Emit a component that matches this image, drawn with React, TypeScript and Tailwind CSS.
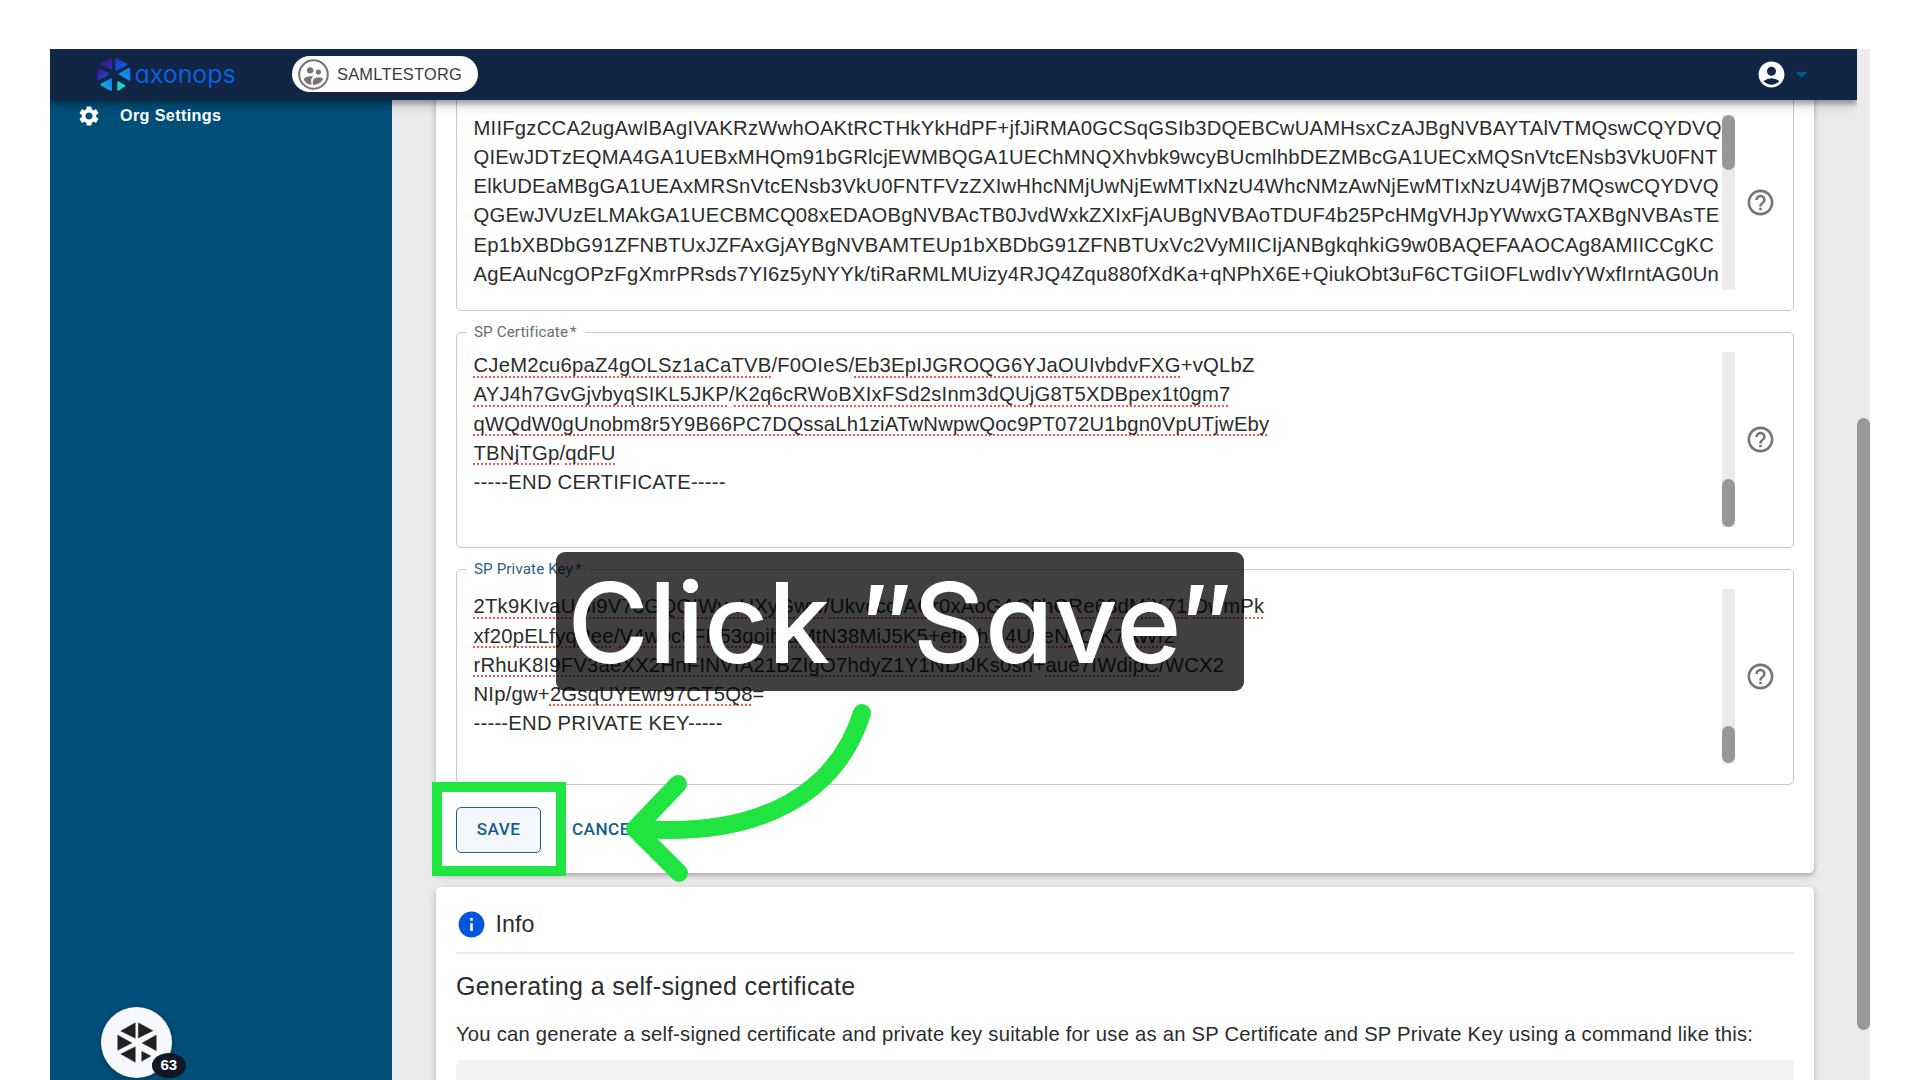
import React from "react";
import { MdSettings, MdAccountCircle, MdArrowDropDown, MdInfo, MdHelpOutline } from "react-icons/md";

type Part = { t: string; bad?: boolean };

const IDP: Part[][] = [
  [{ t: "MIIFgzCCA2ugAwIBAgIVAKRzWwhOAKtRCTHkYkHdPF+jfJiRMA0GCSqGSIb3DQEBCwUAMHsxCzAJBgNVBAYTAlVTMQswCQYDVQ" }],
  [{ t: "QIEwJDTzEQMA4GA1UEBxMHQm91bGRlcjEWMBQGA1UEChMNQXhvbk9wcyBUcmlhbDEZMBcGA1UECxMQSnVtcENsb3VkU0FNT" }],
  [{ t: "ElkUDEaMBgGA1UEAxMRSnVtcENsb3VkU0FNTFVzZXIwHhcNMjUwNjEwMTIxNzU4WhcNMzAwNjEwMTIxNzU4WjB7MQswCQYDVQ" }],
  [{ t: "QGEwJVUzELMAkGA1UECBMCQ08xEDAOBgNVBAcTB0JvdWxkZXIxFjAUBgNVBAoTDUF4b25PcHMgVHJpYWwxGTAXBgNVBAsTE" }],
  [{ t: "Ep1bXBDbG91ZFNBTUxJZFAxGjAYBgNVBAMTEUp1bXBDbG91ZFNBTUxVc2VyMIICIjANBgkqhkiG9w0BAQEFAAOCAg8AMIICCgKC" }],
  [{ t: "AgEAuNcgOPzFgXmrPRsds7YI6z5yNYYk/tiRaRMLMUizy4RJQ4Zqu880fXdKa+qNPhX6E+QiukObt3uF6CTGiIOFLwdIvYWxfIrntAG0Un" }],
];

const CERT: Part[][] = [
  [{ t: "CJeM2cu6paZ4gOLSz1aCaTVB", bad: true }, { t: "/F0OIeS/" }, { t: "Eb3EpIJGROQG6YJaOUIvbdvFXG", bad: true }, { t: "+vQLbZ" }],
  [{ t: "AYJ4h7GvGjvbyqSIKL5JKP", bad: true }, { t: "/" }, { t: "K2q6cRWoBXIxFSd2sInm3dQUjG8T5XDBpex1t0gm7", bad: true }],
  [{ t: "qWQdW0gUnobm8r5Y9B66PC7DQssaLh1ziATwNwpwQoc9PT072U1bgn0VpUTjwEby", bad: true }],
  [{ t: "TBNjTGp", bad: true }, { t: "/" }, { t: "qdFU", bad: true }],
  [{ t: "-----END CERTIFICATE-----" }],
];

const KEY: Part[][] = [
  [{ t: "2Tk9KIvaUGi9V73GQQIWvaUXyGww", bad: true }, { t: "/" }, { t: "UkvccoIACr0xAoGAC8hCRe68dMiX71", bad: true }, { t: "/" }, { t: "DwmPk", bad: true }],
  [{ t: "xf20pELfyqPee", bad: true }, { t: "/" }, { t: "V4w9c6FE53qoihIaMtN38MiJ5K5", bad: true }, { t: "+" }, { t: "efFrhIJ4UpeNyCtK7AWI2", bad: true }],
  [{ t: "rRhuK8I9FV3aeXX2HnFINVIA21BZIgO7hdyZ1Y1NDIJKs0sh", bad: true }, { t: "+" }, { t: "aue7IWdipC", bad: true }, { t: "/WCX2" }],
  [{ t: "NIp/gw+" }, { t: "2GsqUYEwr97CT5Q8", bad: true }, { t: "=" }],
  [{ t: "-----END PRIVATE KEY-----" }],
];

const BADGE_BLADES = [
  "284,127 284,174 240,152",
  "293,127 337,151 293,173",
  "347,164 347,211 304,188",
  "303,213 331,227 303,243",
  "284,199 284,246 240,221",
  "231,164 274,188 231,210",
];

const LOGO_BLADES: [string, string][] = [
  ["213,60 213,88 185,73", "url(#lg0)"],
  ["229,60 259,75 229,91", "url(#lg1)"],
  ["268,88 268,121 240,104", "url(#lg2)"],
  ["235,129 253,140 235,151", "#1fd0d0"],
  ["213,120 213,152 184,136", "url(#lg3)"],
  ["175,88 204,104 175,120", "url(#lg4)"],
];

function BadgeMark() {
  return (
    <svg viewBox="229 125 120 123" className="h-[41px] w-[40px] fill-[#231f20] stroke-[#231f20]">
      {BADGE_BLADES.map((p) => (
        <polygon key={p} points={p} strokeWidth="1" strokeLinejoin="round" />
      ))}
    </svg>
  );
}

function LogoMark() {
  return (
    <svg viewBox="171 53 101 102" className="h-[34px] w-[33.6px]">
      <defs>
        <linearGradient id="lg0" x1="0" y1="0" x2="1" y2="1"><stop offset="0" stopColor="#3d1780" /><stop offset="1" stopColor="#3028a8" /></linearGradient>
        <linearGradient id="lg1" x1="0" y1="0" x2="1" y2="1"><stop offset="0" stopColor="#1f3cc4" /><stop offset="1" stopColor="#0a62e6" /></linearGradient>
        <linearGradient id="lg2" x1="0" y1="1" x2="1" y2="0"><stop offset="0" stopColor="#129fe6" /><stop offset="1" stopColor="#0a7ae6" /></linearGradient>
        <linearGradient id="lg3" x1="1" y1="0" x2="0" y2="1"><stop offset="0" stopColor="#1283ee" /><stop offset="1" stopColor="#16b2e0" /></linearGradient>
        <linearGradient id="lg4" x1="0" y1="0" x2="1" y2="1"><stop offset="0" stopColor="#38128a" /><stop offset="1" stopColor="#1a5ad8" /></linearGradient>
      </defs>
      {LOGO_BLADES.map(([p, f]) => (
        <polygon key={p} points={p} fill={f} stroke={f} strokeWidth="6" strokeLinejoin="round" />
      ))}
    </svg>
  );
}

function Field({ label, focused, lines, thumb }: { label?: string; focused?: boolean; lines: Part[][]; thumb: string }) {
  return (
    <div className="relative flex h-[216px] shrink-0 items-start rounded-[5px] border-[1.5px] border-[#c8c8c8] pt-[19px] pl-[16.5px]">
      {label && (
        <span className={"absolute -top-[10.5px] left-[9px] bg-white pl-[8px] pr-[8px] font-['Roboto',sans-serif] text-[15.2px] leading-[18px] tracking-[0.1px] " + (focused ? "text-[#2e5f80]" : "text-[#6b6b6b]")}>
          {label.replace(" *", "")}<span className="ml-[2px]">*</span>
        </span>
      )}
      <div className="h-[175px] w-[1248px] text-[20.25px] leading-[29.15px] tracking-[0.22px] whitespace-nowrap text-[#2c2c2c]">
        <div className={focused ? "mt-[3px]" : "-mt-[1px]"}>
          {lines.map((l, i) => (
            <div key={i}>
              {l.map((p, j) => (
                <span key={j} className={p.bad ? "underline decoration-[#ff5050] decoration-dotted decoration-[2px] underline-offset-[4px] [text-decoration-skip-ink:none]" : ""}>{p.t}</span>
              ))}
            </div>
          ))}
        </div>
      </div>
      <div className="relative z-10 h-[175px] w-[13px] bg-[#ebebeb]">
        <div className={"w-[13px] rounded-full bg-[#979797] " + thumb} />
      </div>
      <MdHelpOutline className="mt-[71.5px] ml-[10px] h-[31px] w-[31px] text-[#757575]" />
    </div>
  );
}

function Header() {
  return (
    <header className="relative z-20 flex h-[50.5px] shrink-0 items-center bg-[#112545] pl-[47px] [clip-path:inset(0_0_-30px_0)] shadow-[0_3px_6px_rgba(0,0,0,0.35),0_5px_12px_rgba(0,0,0,0.15)]">
      <LogoMark />
      <span className="-mt-[1px] ml-[4px] w-[102.4px] font-['Inter',sans-serif] text-[25px] leading-[30px] tracking-[-0.1px] text-[#0a5fe0] [font-feature-settings:'cv11']">axonops</span>
      <div className="ml-[55.5px] flex h-[36px] w-[185.5px] items-center rounded-full bg-white pl-[6px]">
        <svg viewBox="0 0 30 30" className="h-[31px] w-[31px]">
          <circle cx="15" cy="15" r="13.8" fill="none" stroke="#757575" strokeWidth="2" />
          <circle cx="11.8" cy="11" r="3.1" fill="#757575" />
          <circle cx="19.8" cy="12.6" r="2.5" fill="#757575" />
          <path d="M5.5 19.5 C7 17.2 10 16.5 13 16.7 L14.8 17 C12.5 18.8 12.3 20.2 13.2 25 C9.5 24.6 6.7 22.6 5.5 19.5Z" fill="#757575" />
          <path d="M14.5 24.8 C13.6 20.2 15.5 17.9 19.8 17.9 C22 17.9 23.6 18.4 24.3 19 C22.8 22.4 19.5 24.9 14.5 24.8Z" fill="#757575" />
        </svg>
        <span className="ml-[7.5px] text-[16.4px] tracking-[0.25px] text-[#3a3a3a]">SAMLTESTORG</span>
      </div>
      <MdAccountCircle className="ml-auto h-[31px] w-[31px] text-white" />
      <MdArrowDropDown className="mr-[41px] h-[29px] w-[29px] text-[#00578a]" />
    </header>
  );
}

export default function App() {
  return (
    <div className="relative flex h-[1080px] w-[1920px] overflow-hidden bg-white pt-[49px] pl-[50px] font-['Liberation_Sans',Arial,sans-serif]">
      <div className="flex w-[1807px] flex-col">
        <Header />
        <div className="flex min-h-0 flex-1">
          <aside className="flex w-[341.5px] shrink-0 flex-col bg-[#004f79] pt-[4px] pl-[27px]">
            <div className="flex h-[24px] items-center text-white">
              <MdSettings className="h-[24px] w-[24px]" />
              <span className="ml-[19px] text-[16.2px] font-bold tracking-[0.35px]">Org Settings</span>
            </div>
          </aside>
          <main className="flex min-w-0 flex-1 flex-col overflow-hidden bg-[#ebebed] pr-[43px] pl-[44px]">
            <section className="-mt-[4.5px] flex h-[778px] shrink-0 flex-col gap-[21.2px] rounded-b-[5px] bg-white px-[20.5px] shadow-[0_3px_4px_rgba(0,0,0,0.14),0_2px_9px_rgba(0,0,0,0.16)]">
              <Field lines={IDP} thumb="h-[55px]" />
              <Field label="SP Certificate *" lines={CERT} thumb="mt-[127px] h-[48px]" />
              <Field label="SP Private Key *" focused lines={KEY} thumb="mt-[137px] h-[37px]" />
              <div className="flex items-center font-['Roboto',sans-serif] text-[17.2px] font-medium tracking-[0.4px] text-[#14608c]">
                <span className="flex h-[46px] w-[85px] items-center justify-center rounded-[5px] border-[1.5px] border-[#1d5f8a] bg-[#f4f7fb] pt-[1px]">SAVE</span>
                <span className="ml-[31px] pt-[1px]">CANCEL</span>
              </div>
            </section>
            <section className="mt-[14px] flex h-[220px] shrink-0 flex-col rounded-t-[5px] bg-white px-[20.5px] shadow-[0_3px_4px_rgba(0,0,0,0.14),0_2px_9px_rgba(0,0,0,0.16)]">
              <div className="flex h-[67px] shrink-0 items-center border-b-[2px] border-[#e9e9e9] pt-[10px]">
                <MdInfo className="h-[31px] w-[31px] text-[#0057dc]" />
                <span className="ml-[8.5px] text-[23.2px] tracking-[0.1px] text-[#2c2c2c]">Info</span>
              </div>
              <h2 className="mt-[15.5px] text-[25px] leading-[32px] tracking-[0.37px] text-[#2c2c2c]">Generating a self-signed certificate</h2>
              <p className="mt-[18.5px] text-[20.25px] leading-[28px] tracking-[0.22px] whitespace-nowrap text-[#2c2c2c]">
                You can generate a self-signed certificate and private key suitable for use as an SP Certificate and SP Private Key using a command like this:
              </p>
              <div className="mt-[12px] h-[60px] rounded-[5px] bg-[#f2f2f2]" />
            </section>
          </main>
        </div>
      </div>
      <div className="h-full w-[13px] bg-[#ebebeb]">
        <div className="mt-[369px] h-[612px] w-[13px] rounded-full bg-[#979797]" />
      </div>

      <div className="absolute top-[1007px] left-[101px] flex h-[71px] w-[71px] items-center justify-center rounded-full bg-[#f7f8fc] shadow-[0_2px_8px_rgba(0,0,0,0.25)]">
        <BadgeMark />
        <span className="absolute top-[46px] left-[50.5px] flex h-[25px] w-[34.5px] items-center justify-center rounded-[50%] bg-[#111726] text-[15px] font-bold text-white">63</span>
      </div>

      <div className="absolute top-[551.5px] left-[555.5px] h-[139.5px] w-[688px] rounded-[9px] bg-black/75 font-['Inter',sans-serif] text-[111px] leading-[139px] font-medium whitespace-nowrap text-white [font-feature-settings:'cv11','ss03']">
        <span className="absolute top-[1px] left-[12px] tracking-[-0.2px]">Click</span>
        <span className="absolute top-[1px] left-[357.5px] tracking-[0.4px]">Save</span>
        <svg viewBox="0 0 40 30" className="absolute top-[33px] left-[312px] h-[30px] w-[40px] fill-white"><path d="M3 0H16L8 30H0Z M27 0H40L32 30H24Z" /></svg>
        <svg viewBox="0 0 40 30" className="absolute top-[33px] left-[632px] h-[30px] w-[40px] fill-white"><path d="M3 0H16L8 30H0Z M27 0H40L32 30H24Z" /></svg>
      </div>

      <div className="absolute top-[782px] left-[432px] h-[94px] w-[134px] border-[10px] border-[#20e43f]" />
      <svg viewBox="620 700 260 190" className="absolute top-[700px] left-[620px] h-[190px] w-[260px]" fill="none" stroke="#20e43f" strokeWidth="18" strokeLinecap="round" strokeLinejoin="round">
        <path d="M862 713 C838 790 765 838 640 829" />
        <path d="M678 784 L635 829 L679 873" />
      </svg>
    </div>
  );
}
